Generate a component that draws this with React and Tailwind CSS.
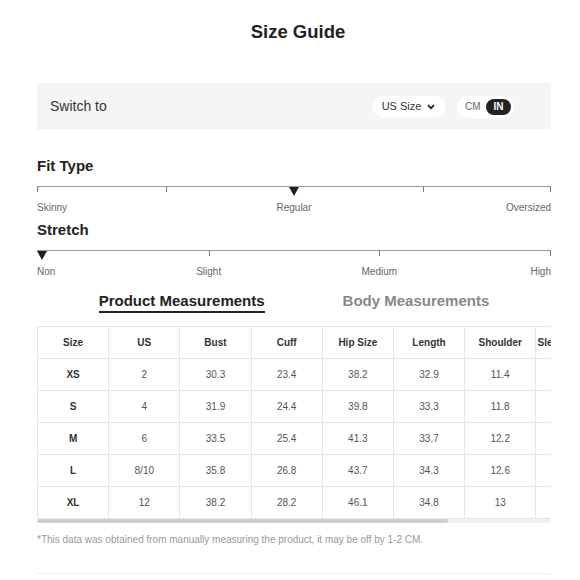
import React from "react";

const rows = [
  ["XS", "2", "30.3", "23.4", "38.2", "32.9", "11.4", ""],
  ["S", "4", "31.9", "24.4", "39.8", "33.3", "11.8", ""],
  ["M", "6", "33.5", "25.4", "41.3", "33.7", "12.2", ""],
  ["L", "8/10", "35.8", "26.8", "43.7", "34.3", "12.6", ""],
  ["XL", "12", "38.2", "28.2", "46.1", "34.8", "13", ""],
];
const heads = ["Size", "US", "Bust", "Cuff", "Hip Size", "Length", "Shoulder", "Sleeve Length"];

function Tick({ pos }) {
  return <div className="absolute top-0 w-px h-[5px] bg-[#777]" style={{ left: pos }} />;
}

function Marker({ className }) {
  return (
    <div
      className={
        "absolute top-0 w-0 h-0 border-l-[5px] border-r-[5px] border-t-[9px] border-l-transparent border-r-transparent border-t-[#222] " +
        className
      }
    />
  );
}

export default function App() {
  return (
    <div
      className="w-[580px] h-[580px] bg-white overflow-hidden"
      style={{ fontFamily: '"Liberation Sans", Arial, sans-serif' }}
    >
      <div className="ml-[37px] w-[514px] pt-[21px]">
        <h1 className="text-center text-[18.5px] leading-[22px] font-bold text-[#222] pl-[8px]">Size Guide</h1>

        <div className="mt-[40px] h-[47px] bg-[#f5f5f5] flex items-center pl-[13px] pr-[37px]">
          <span className="text-[14px] text-[#333]">Switch to</span>
          <div className="ml-auto flex items-center gap-[12px]">
            <div className="h-[21px] w-[73px] rounded-full bg-white flex items-center justify-center gap-[6px]">
              <span className="text-[11px] text-[#333]">US Size</span>
              <svg width="8" height="6" viewBox="0 0 8 6" fill="none">
                <path d="M1 1.2 L4 4.2 L7 1.2" stroke="#222" strokeWidth="1.8" />
              </svg>
            </div>
            <div className="h-[22px] w-[57px] rounded-full bg-white flex items-center pl-[8px] pr-[3px]">
              <span className="text-[10px] text-[#666]">CM</span>
              <span className="ml-auto h-[16px] w-[25px] rounded-full bg-[#222] text-white text-[10px] font-bold flex items-center justify-center">
                IN
              </span>
            </div>
          </div>
        </div>

        <h2 className="mt-[27px] text-[15px] leading-[18px] font-bold text-[#222]">Fit Type</h2>
        <div className="mt-[11px] relative h-[16px] border-t border-[#999]">
          <Tick pos="0%" />
          <Tick pos="25%" />
          <Tick pos="75%" />
          <div className="absolute top-0 right-0 w-px h-[5px] bg-[#777]" />
          <Marker className="left-1/2 -translate-x-1/2" />
        </div>
        <div className="relative h-[12px] text-[10px] leading-[12px] text-[#666]">
          <span className="absolute left-0">Skinny</span>
          <span className="absolute left-1/2 -translate-x-1/2">Regular</span>
          <span className="absolute right-0">Oversized</span>
        </div>

        <h2 className="mt-[7px] text-[15px] leading-[18px] font-bold text-[#222]">Stretch</h2>
        <div className="mt-[11px] relative h-[16px] border-t border-[#999]">
          <Tick pos="33.4%" />
          <Tick pos="66.6%" />
          <div className="absolute top-0 right-0 w-px h-[5px] bg-[#777]" />
          <Marker className="left-0" />
        </div>
        <div className="relative h-[12px] text-[10px] leading-[12px] text-[#666]">
          <span className="absolute left-0">Non</span>
          <span className="absolute left-[33.4%] -translate-x-1/2">Slight</span>
          <span className="absolute left-[66.6%] -translate-x-1/2">Medium</span>
          <span className="absolute right-0">High</span>
        </div>

        <div className="mt-[14px] flex justify-center gap-[78px] text-[15px] leading-[18px] font-bold">
          <span className="text-[#222] border-b-[2px] border-[#222] pb-px">Product Measurements</span>
          <span className="text-[#888]">Body Measurements</span>
        </div>

        <div className="mt-[13px] w-[514px] overflow-hidden">
          <div className="w-[644px]">
            <table className="border-collapse table-fixed w-[570px]">
              <thead>
                <tr>
                  {heads.map((h) => (
                    <th
                      key={h}
                      className="w-[71.2px] h-[32px] border border-[#e6e6e6] text-[10px] font-bold text-[#333] text-center whitespace-nowrap overflow-hidden"
                    >
                      {h}
                    </th>
                  ))}
                </tr>
              </thead>
              <tbody>
                {rows.map((r) => (
                  <tr key={r[0]}>
                    {r.map((c, i) => (
                      <td
                        key={i}
                        className={
                          "h-[32px] border border-[#e6e6e6] text-[10px] text-center " +
                          (i === 0 ? "font-bold text-[#333]" : "text-[#555]")
                        }
                      >
                        {c}
                      </td>
                    ))}
                  </tr>
                ))}
              </tbody>
            </table>
          </div>
        </div>
        <div className="h-[4px] w-full bg-[#f1f1f1] rounded-full">
          <div className="h-[4px] w-[411px] bg-[#cfcfcf] rounded-full" />
        </div>

        <p className="mt-[11px] text-[10px] leading-[12px] text-[#999]">
          *This data was obtained from manually measuring the product, it may be off by 1-2 CM.
        </p>

        <div className="mt-[27px] h-px bg-[#eee]" />
      </div>
    </div>
  );
}
